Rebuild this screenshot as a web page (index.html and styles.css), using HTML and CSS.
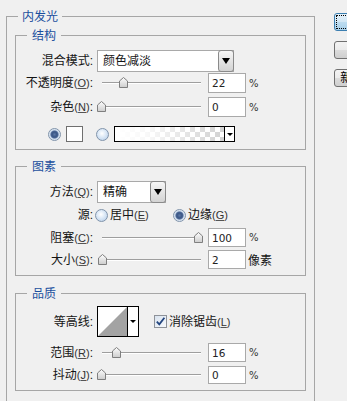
FILE: index.html
```html
<!DOCTYPE html>
<html>
<head>
<meta charset="utf-8">
<link rel="stylesheet" href="styles.css">
</head>
<body>
<div class="dialog">
  <fieldset class="outer">
    <legend>内发光</legend>

    <fieldset class="group g1">
      <legend>结构</legend>
      <div class="row h22">
        <span class="lbl">混合模式:</span>
        <div class="select s-wide"><span class="sel-text">颜色减淡</span><span class="sel-btn"><i class="tri"></i></span></div>
      </div>
      <div class="row h20 mt1">
        <span class="lbl">不透明度<span class="mn">(<u>O</u>)</span>:</span>
        <div class="slider"><span class="track"></span><svg class="thumb" style="left:22px" width="9" height="11" viewBox="0 0 9 11"><defs><linearGradient id="t1" x1="0" y1="0" x2="0" y2="1"><stop offset="0" stop-color="#fdfdfd"/><stop offset="1" stop-color="#cdcdcd"/></linearGradient></defs><path d="M0.5 4 L4.5 0.5 L8.5 4 V10.5 H0.5 Z" fill="url(#t1)" stroke="#7f7f7f"/></svg></div>
        <span class="field">22</span><span class="unit">%</span>
      </div>
      <div class="row h20 mt4">
        <span class="lbl">杂色<span class="mn">(<u>N</u>)</span>:</span>
        <div class="slider"><span class="track"></span><svg class="thumb" style="left:0px" width="9" height="11" viewBox="0 0 9 11"><defs><linearGradient id="t2" x1="0" y1="0" x2="0" y2="1"><stop offset="0" stop-color="#fdfdfd"/><stop offset="1" stop-color="#cdcdcd"/></linearGradient></defs><path d="M0.5 4 L4.5 0.5 L8.5 4 V10.5 H0.5 Z" fill="url(#t2)" stroke="#7f7f7f"/></svg></div>
        <span class="field">0</span><span class="unit">%</span>
      </div>
      <div class="row h16 mt9 colors">
        <span class="radio on"></span>
        <span class="swatch"></span>
        <span class="radio r2"></span>
        <div class="gradient"><span class="grad-fill"></span><span class="grad-btn"><i class="tri-s"></i></span></div>
      </div>
    </fieldset>

    <fieldset class="group g2">
      <legend>图素</legend>
      <div class="row h22">
        <span class="lbl">方法<span class="mn">(<u>Q</u>)</span>:</span>
        <div class="select s-narrow"><span class="sel-text">精确</span><span class="sel-btn"><i class="tri"></i></span></div>
      </div>
      <div class="row h16 mt4 src">
        <span class="lbl">源:</span>
        <label class="opt o1"><span class="radio"></span><span>居中<span class="mn">(<u>E</u>)</span></span></label>
        <label class="opt"><span class="radio on"></span><span>边缘<span class="mn">(<u>G</u>)</span></span></label>
      </div>
      <div class="row h19 mt5">
        <span class="lbl">阻塞<span class="mn">(<u>C</u>)</span>:</span>
        <div class="slider"><span class="track"></span><svg class="thumb" style="left:97px" width="9" height="11" viewBox="0 0 9 11"><defs><linearGradient id="t3" x1="0" y1="0" x2="0" y2="1"><stop offset="0" stop-color="#fdfdfd"/><stop offset="1" stop-color="#cdcdcd"/></linearGradient></defs><path d="M0.5 4 L4.5 0.5 L8.5 4 V10.5 H0.5 Z" fill="url(#t3)" stroke="#7f7f7f"/></svg></div>
        <span class="field">100</span><span class="unit">%</span>
      </div>
      <div class="row h19 mt3">
        <span class="lbl">大小<span class="mn">(<u>S</u>)</span>:</span>
        <div class="slider"><span class="track"></span><svg class="thumb" style="left:1px" width="9" height="11" viewBox="0 0 9 11"><defs><linearGradient id="t4" x1="0" y1="0" x2="0" y2="1"><stop offset="0" stop-color="#fdfdfd"/><stop offset="1" stop-color="#cdcdcd"/></linearGradient></defs><path d="M0.5 4 L4.5 0.5 L8.5 4 V10.5 H0.5 Z" fill="url(#t4)" stroke="#7f7f7f"/></svg></div>
        <span class="field">2</span><span class="unit cjk">像素</span>
      </div>
    </fieldset>

    <fieldset class="group g3">
      <legend>品质</legend>
      <div class="row h31">
        <span class="lbl">等高线:</span>
        <div class="contour">
          <svg class="contour-pic" width="31" height="31" viewBox="0 0 31 31"><rect x="0.5" y="0.5" width="30" height="30" fill="#ffffff" stroke="#000000"/><polygon points="1,30 30,1 30,30" fill="#a3a3a3"/></svg>
          <span class="contour-btn"><i class="tri-s"></i></span>
        </div>
        <label class="check-opt"><span class="checkbox"><svg width="11" height="11" viewBox="0 0 11 11"><path d="M1.8 5.6 L4.3 8.3 L9.4 1.8" fill="none" stroke="#23457f" stroke-width="1.8"/></svg></span><span>消除锯齿<span class="mn">(<u>L</u>)</span></span></label>
      </div>
      <div class="row h19 mt6">
        <span class="lbl">范围<span class="mn">(<u>R</u>)</span>:</span>
        <div class="slider"><span class="track"></span><svg class="thumb" style="left:15px" width="9" height="11" viewBox="0 0 9 11"><defs><linearGradient id="t5" x1="0" y1="0" x2="0" y2="1"><stop offset="0" stop-color="#fdfdfd"/><stop offset="1" stop-color="#cdcdcd"/></linearGradient></defs><path d="M0.5 4 L4.5 0.5 L8.5 4 V10.5 H0.5 Z" fill="url(#t5)" stroke="#7f7f7f"/></svg></div>
        <span class="field">16</span><span class="unit">%</span>
      </div>
      <div class="row h18 mt4">
        <span class="lbl">抖动<span class="mn">(<u>J</u>)</span>:</span>
        <div class="slider"><span class="track"></span><svg class="thumb" style="left:0px" width="9" height="11" viewBox="0 0 9 11"><defs><linearGradient id="t6" x1="0" y1="0" x2="0" y2="1"><stop offset="0" stop-color="#fdfdfd"/><stop offset="1" stop-color="#cdcdcd"/></linearGradient></defs><path d="M0.5 4 L4.5 0.5 L8.5 4 V10.5 H0.5 Z" fill="url(#t6)" stroke="#7f7f7f"/></svg></div>
        <span class="field">0</span><span class="unit">%</span>
      </div>
    </fieldset>
  </fieldset>

  <div class="buttons">
    <button class="btn default">确定</button>
    <button class="btn">复位</button>
    <button class="btn">新建样式(W)...</button>
  </div>
</div>
</body>
</html>
```

FILE: styles.css
```css
* { box-sizing: border-box; }
html, body { margin: 0; padding: 0; }
body {
  background: #f0f0f0;
  width: 347px;
  height: 401px;
  overflow: hidden;
  font-family: "Liberation Sans", "Noto Sans CJK SC", sans-serif;
  font-size: 12px;
  color: #141414;
}
.dialog { display: flex; align-items: flex-start; }

fieldset {
  margin: 0;
  padding: 0;
  border: 1px solid #a6a6a6;
  min-width: 0;
}
legend {
  padding: 0 5px;
  height: 14px;
  line-height: 14px;
  font-family: "Noto Sans CJK SC", sans-serif;
  font-size: 12px;
  color: #1b4f9e;
}
.outer {
  flex: none;
  width: 309px;
  margin: 9px 0 0 6px;
  padding: 5px 8px 30px 8px;
}
.outer > legend { margin-left: 3px; padding: 0 4px; }
.group > legend { margin-left: 11px; }

.g1 { padding: 8px 0 7px 0; }
.g2 { padding: 8px 0 6px 0; margin-top: 9px; }
.g3 { padding: 6px 0 6px 0; margin-top: 10px; }

.row { display: flex; align-items: center; }
.h16 { height: 16px; }
.h18 { height: 18px; }
.h19 { height: 19px; }
.h20 { height: 20px; }
.h22 { height: 22px; }
.h31 { height: 31px; }
.mt1 { margin-top: 1px; }
.mt3 { margin-top: 3px; }
.mt4 { margin-top: 4px; }
.mt5 { margin-top: 5px; }
.mt6 { margin-top: 6px; }
.mt9 { margin-top: 9px; }

.lbl {
  flex: none;
  width: 77px;
  text-align: right;
  white-space: nowrap;
  line-height: 14px;
}
.mn {
  font-family: "Liberation Sans", sans-serif;
  font-size: 11px;
  color: #333;
}
.mn u { text-decoration-color: #555; }

/* select */
.select {
  flex: none;
  display: flex;
  height: 22px;
  margin-left: 4px;
  background: #fff;
  border: 1px solid #a9a9a9;
}
.s-wide { width: 137px; }
.s-narrow { width: 69px; }
.sel-text { flex: 1; padding-left: 5px; line-height: 20px; white-space: nowrap; }
.sel-btn {
  flex: none;
  width: 16px;
  margin: -1px -1px -1px 0;
  border: 1px solid #8a8a8a;
  border-radius: 3px;
  background: linear-gradient(#f7f7f7, #e4e4e4 50%, #d3d3d3);
  display: flex;
  align-items: center;
  justify-content: center;
}
.tri {
  width: 0; height: 0;
  border-left: 4px solid transparent;
  border-right: 4px solid transparent;
  border-top: 6px solid #000;
}
.tri-s {
  width: 0; height: 0;
  border-left: 3px solid transparent;
  border-right: 3px solid transparent;
  border-top: 3px solid #000;
}

/* slider */
.slider {
  flex: none;
  position: relative;
  width: 106px;
  height: 100%;
  margin-left: 4px;
  display: flex;
  align-items: center;
}
.track {
  display: block;
  width: 99px;
  height: 2px;
  margin-left: 5px;
  border-top: 1px solid #9e9e9e;
  border-bottom: 1px solid #ffffff;
}
.thumb { position: absolute; top: calc(50% - 6px); }

.field {
  flex: none;
  width: 38px;
  height: 100%;
  margin-left: 5px;
  background: #fff;
  border: 1px solid #a9a9a9;
  padding-left: 3px;
  display: flex;
  align-items: center;
  font-family: "DejaVu Sans", sans-serif;
  font-size: 10.5px;
  color: #222;
}
.unit {
  margin-left: 3px;
  font-family: "DejaVu Sans", sans-serif;
  font-size: 10px;
  color: #333;
}
.unit.cjk { font-family: "Noto Sans CJK SC", sans-serif; font-size: 12px; color: #141414; margin-left: 2px; }

/* radios */
.radio {
  flex: none;
  width: 13px;
  height: 13px;
  border-radius: 50%;
  border: 1px solid #8194ab;
  background: radial-gradient(circle at 45% 40%, #ffffff 0, #dbe8f6 45%, #b0c9e6 100%);
}
.radio.on {
  background: radial-gradient(circle at 50% 50%, #5b77a6 0, #3a5685 2.5px, #4d6897 3.5px, #c9d8ea 4.5px, #eef4fb 6px);
}
.colors { padding-left: 32px; }
.swatch {
  flex: none;
  width: 17px;
  height: 16px;
  margin-left: 5px;
  background: #fff;
  border: 1px solid #6f6f6f;
}
.radio.r2 { margin-left: 13px; }
.gradient {
  flex: none;
  display: flex;
  width: 121px;
  height: 16px;
  margin-left: 5px;
  border: 1px solid #000;
  background: #fff;
}
.grad-fill {
  flex: 1;
  background:
    linear-gradient(to right, #ffffff 0%, rgba(255,255,255,0.85) 30%, rgba(255,255,255,0) 100%),
    repeating-conic-gradient(#d2d2d2 0 25%, #ffffff 0 50%) 0 0 / 10px 10px;
}
.grad-btn {
  flex: none;
  width: 10px;
  border-left: 1px solid #000;
  background: #fff;
  display: flex;
  align-items: center;
  justify-content: center;
}

/* source row */
.src .lbl { width: 77px; }
.opt { display: flex; align-items: center; gap: 2px; white-space: nowrap; line-height: 14px; }
.o1 { width: 78px; margin-left: 2px; }

/* contour */
.contour { flex: none; display: flex; margin-left: 4px; height: 31px; }
.contour-pic { display: block; }
.contour-btn {
  width: 11px;
  height: 31px;
  border: 1px solid #000;
  border-left: none;
  background: #fff;
  display: flex;
  align-items: center;
  justify-content: center;
}
.check-opt { display: flex; align-items: center; gap: 2px; margin-left: 15px; white-space: nowrap; line-height: 14px; }
.checkbox {
  flex: none;
  width: 13px;
  height: 13px;
  border: 1px solid #8e9299;
  background: linear-gradient(135deg, #d9e3ef, #f7f9fc);
  display: flex;
  align-items: center;
  justify-content: center;
}
.checkbox svg { display: block; }

/* buttons */
.buttons {
  flex: none;
  margin-left: 19px;
  padding-top: 13px;
  display: flex;
  flex-direction: column;
  gap: 10px;
}
.btn {
  width: 90px;
  height: 18px;
  padding: 0;
  border: 1px solid #707070;
  border-radius: 3px;
  background: linear-gradient(#f3f3f3 0, #ebebeb 50%, #dcdcdc 51%, #cfcfcf 100%);
  font-family: "Liberation Sans", "Noto Sans CJK SC", sans-serif;
  font-size: 12px;
  line-height: 16px;
  color: #000;
  text-align: center;
  white-space: nowrap;
}
.btn.default {
  border-color: #3c7fb1;
  background: linear-gradient(#e5f1f9 0, #d2e7f5 50%, #bcdcf0 51%, #a9d0ea 100%);
  outline: 1px dotted #000;
  outline-offset: -3px;
}
```
